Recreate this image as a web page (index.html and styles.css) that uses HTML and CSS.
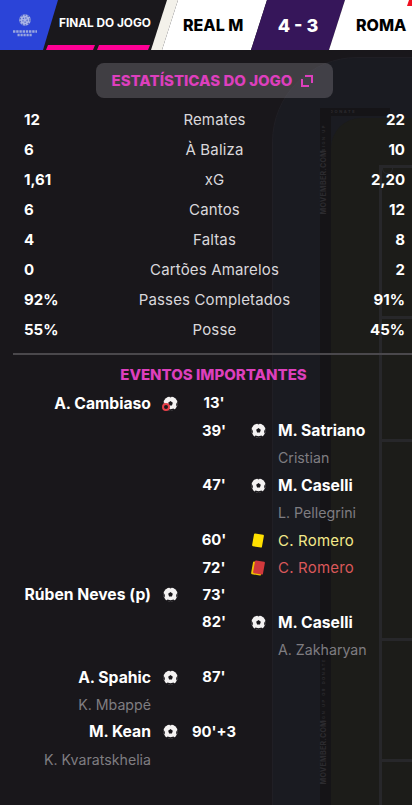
FILE: index.html
```html
<!DOCTYPE html>
<html lang="en">
<head>
    <meta charset="UTF-8">
    <meta name="viewport" content="width=device-width, initial-scale=1.0">
    <title>Final do Jogo</title>
    <link rel="stylesheet" href="styles.css">
</head>
<body>
    <div class="backdrop">
        <div class="backdrop-stand"></div>
        <div class="ad-band"><span class="ad-small">DONATE</span></div>
        <div class="ad-strip"></div>
        <span class="ad-small ad-vert ad-sign-top">SIGN UP</span>
        <span class="ad-text ad-text-top">MOVEMBER.COM</span>
        <span class="ad-small ad-vert ad-sign-bottom">SIGN UP OR DONATE</span>
        <span class="ad-text ad-text-bottom">MOVEMBER.COM</span>
        <div class="pitch">
            <div class="pitch-side"></div>
            <div class="pitch-line line-a"><span class="pitch-arc"></span></div>
            <div class="pitch-line line-b"></div>
            <div class="pitch-line line-c"></div>
            <div class="pitch-line line-d"></div>
            <div class="pitch-line line-e"></div>
        </div>
    </div>

    <div class="header">
        <div class="comp-logo">
            <svg width="24" height="23" viewBox="0 0 24 23">
                <circle cx="12" cy="6" r="5.8" fill="#a9b4e6"/>
                <circle cx="12" cy="6" r="5" fill="none" stroke="#4f64c8" stroke-width="1.4" stroke-dasharray="1.6 1.6"/>
                <circle cx="12" cy="6" r="2.2" fill="none" stroke="#4f64c8" stroke-width="1.2" stroke-dasharray="1.2 1.2"/>
                <path d="M0 17.5h24" stroke="#9aa6df" stroke-width="2.6" stroke-dasharray="2.4 .8"/>
                <path d="M4.5 21h15" stroke="#9aa6df" stroke-width="2.6" stroke-dasharray="2.2 .8"/>
            </svg>
        </div>
        <div class="stage">
            <span class="stage-name">FINAL DO JOGO</span>
            <div class="stage-bars">
                <span class="stage-bar"></span>
                <span class="stage-bar"></span>
            </div>
        </div>
        <div class="team-edge"></div>
        <div class="team team-home">REAL M</div>
        <div class="score">4 - 3</div>
        <div class="team team-away">ROMA<span class="team-flash"></span></div>
    </div>

    <div class="title-row">
        <div class="stats-title">
            <span>ESTATÍSTICAS DO JOGO</span>
            <svg width="14" height="14" viewBox="0 0 14 14" fill="none" stroke="#dd3fbd" stroke-width="2">
                <path d="M5 2h7v7"/>
                <path d="M2 5v7h7"/>
            </svg>
        </div>
    </div>

    <div class="stats">
        <div class="stat-row"><span class="stat-val">12</span><span class="stat-label">Remates</span><span class="stat-val right">22</span></div>
        <div class="stat-row"><span class="stat-val">6</span><span class="stat-label">À Baliza</span><span class="stat-val right">10</span></div>
        <div class="stat-row"><span class="stat-val">1,61</span><span class="stat-label">xG</span><span class="stat-val right">2,20</span></div>
        <div class="stat-row"><span class="stat-val">6</span><span class="stat-label">Cantos</span><span class="stat-val right">12</span></div>
        <div class="stat-row"><span class="stat-val">4</span><span class="stat-label">Faltas</span><span class="stat-val right">8</span></div>
        <div class="stat-row"><span class="stat-val">0</span><span class="stat-label">Cartões Amarelos</span><span class="stat-val right">2</span></div>
        <div class="stat-row"><span class="stat-val">92%</span><span class="stat-label">Passes Completados</span><span class="stat-val right">91%</span></div>
        <div class="stat-row"><span class="stat-val">55%</span><span class="stat-label">Posse</span><span class="stat-val right">45%</span></div>
    </div>

    <div class="divider"></div>

    <div class="events-title">EVENTOS IMPORTANTES</div>

    <div class="events">
        <div class="event"><span class="name-left">A. Cambiaso</span><span class="icon"><svg class="ball"><use href="#ball"/></svg><span class="own-goal"></span></span><span class="minute">13'</span></div>
        <div class="event"><span class="minute">39'</span><span class="icon"><svg class="ball"><use href="#ball"/></svg></span><span class="name-right">M. Satriano</span></div>
        <div class="event"><span class="assist-right">Cristian</span></div>
        <div class="event"><span class="minute">47'</span><span class="icon"><svg class="ball"><use href="#ball"/></svg></span><span class="name-right">M. Caselli</span></div>
        <div class="event"><span class="assist-right">L. Pellegrini</span></div>
        <div class="event"><span class="minute">60'</span><span class="icon"><span class="card card-yellow"></span></span><span class="name-right booked">C. Romero</span></div>
        <div class="event"><span class="minute">72'</span><span class="icon"><span class="card card-second"></span><span class="card card-red"></span></span><span class="name-right sent-off">C. Romero</span></div>
        <div class="event"><span class="name-left">Rúben Neves (p)</span><span class="icon"><svg class="ball"><use href="#ball"/></svg></span><span class="minute">73'</span></div>
        <div class="event"><span class="minute">82'</span><span class="icon"><svg class="ball"><use href="#ball"/></svg></span><span class="name-right">M. Caselli</span></div>
        <div class="event"><span class="assist-right">A. Zakharyan</span></div>
        <div class="event"><span class="name-left">A. Spahic</span><span class="icon"><svg class="ball"><use href="#ball"/></svg></span><span class="minute">87'</span></div>
        <div class="event"><span class="assist-left">K. Mbappé</span></div>
        <div class="event"><span class="name-left">M. Kean</span><span class="icon"><svg class="ball"><use href="#ball"/></svg></span><span class="minute">90'+3</span></div>
        <div class="event"><span class="assist-left">K. Kvaratskhelia</span></div>
    </div>

    <svg class="defs" width="0" height="0">
        <symbol id="ball" viewBox="0 0 16 16">
            <circle cx="8" cy="8" r="7.6" fill="#f4f2f2"/>
            <path d="M8 5.4l2.5 1.8-1 2.9H6.5l-1-2.9z" fill="#1a181c"/>
            <path d="M6 .4L8 1.6 10 .4 8 0zM.4 5.5l1.6 3-.3 3L.2 9zM15.6 5.5l-1.6 3 .3 3L15.8 9zM4.6 13.2l3.4 1 3.4-1 .6 1.6-4 1.2-4-1.2z" fill="#1a181c"/>
        </symbol>
    </svg>
</body>
</html>
```

FILE: styles.css
```css
html, body {
    margin: 0;
    padding: 0;
}
body {
    position: relative;
    width: 412px;
    height: 805px;
    overflow: hidden;
    background-color: #1a181c;
    color: #f4f3f5;
    font-family: Inter, 'Noto Sans', sans-serif;
    font-size: 14px;
}

/* faint stadium picture behind everything */
.backdrop {
    position: absolute;
    top: 50px;
    left: 0;
    right: 0;
    bottom: 0;
    overflow: hidden;
    background: #19171b;
}
.backdrop-stand {
    position: absolute;
    left: 272px;
    top: 7px;
    width: 300px;
    height: 900px;
    box-sizing: border-box;
    border: 1px solid #201f25;
    border-radius: 85px 0 0 0;
    background: #1a1b21;
}
.ad-band {
    position: absolute;
    left: 320px;
    top: 58px;
    right: 22px;
    height: 8px;
    background: #151417;
}
.ad-strip {
    position: absolute;
    left: 320px;
    top: 58px;
    bottom: 0;
    width: 11px;
    background: #151417;
}
.ad-small {
    display: block;
    margin-left: 10px;
    font-size: 4px;
    font-weight: 700;
    letter-spacing: 1.6px;
    line-height: 8px;
    color: #2b2a2e;
    white-space: nowrap;
}
.ad-vert {
    position: absolute;
    left: 320px;
    width: 8px;
    margin-left: 0;
    line-height: 8px;
    writing-mode: vertical-rl;
    transform: rotate(180deg);
}
.ad-sign-top { top: 74px; }
.ad-sign-bottom { top: 608px; }
.ad-text {
    position: absolute;
    left: 320px;
    width: 8px;
    writing-mode: vertical-rl;
    transform: rotate(180deg);
    font-size: 7px;
    font-weight: 800;
    letter-spacing: 0.3px;
    color: #2c2b2f;
    line-height: 8px;
    white-space: nowrap;
}
.ad-text-top { top: 100px; }
.ad-text-bottom { top: 670px; }
.pitch {
    position: absolute;
    left: 331px;
    top: 68px;
    right: -40px;
    bottom: -20px;
    background: #1c1c19;
    border-radius: 30px 0 0 0;
}
.pitch-side {
    position: absolute;
    left: 48px;
    top: 47px;
    bottom: 0;
    width: 3px;
    background: #27272a;
}
.pitch-line {
    position: absolute;
    left: 48px;
    right: 0;
    height: 3px;
    background: #27272a;
}
.line-a { top: 47px; }
.line-b { top: 198px; }
.line-c { top: 321px; }
.line-d { top: 520px; }
.line-e { top: 641px; }
.pitch-arc {
    position: absolute;
    left: 3px;
    top: 3px;
    width: 9px;
    height: 5px;
    border: 1px solid #27272a;
    border-top: 0;
    border-radius: 0 0 9px 9px;
}

/* match header */
.header {
    position: relative;
    display: flex;
    height: 50px;
    background: #1a181c;
}
.comp-logo {
    display: flex;
    align-items: center;
    justify-content: center;
    width: 58px;
    padding-right: 9px;
    padding-top: 1px;
    box-sizing: border-box;
    background: #2b44d8;
    clip-path: polygon(0 0, 100% 0, 43px 100%, 0 100%);
}
.stage {
    position: relative;
    width: 109px;
    flex: none;
}
.stage-name {
    display: block;
    margin: 16px 0 0 1px;
    font-size: 11.8px;
    font-weight: 700;
    line-height: 14px;
    white-space: nowrap;
    color: #fff;
}
.stage-bars {
    position: absolute;
    left: -12px;
    bottom: 0;
    display: flex;
    gap: 2px;
}
.stage-bar {
    width: 49px;
    height: 5px;
    background: #ff0095;
    clip-path: polygon(2px 0, 100% 0, calc(100% - 2px) 100%, 0 100%);
}
.stage-bar + .stage-bar {
    width: 53px;
}
.team-edge {
    flex: none;
    width: 27px;
    margin-left: -16px;
    background: #f3f1ea;
    clip-path: polygon(16px 0, 100% 0, 11px 100%, 0 100%);
}
.team {
    display: flex;
    align-items: center;
    background: #fff;
    color: #000;
    font-size: 16px;
    font-weight: 800;
}
.team-home {
    flex: none;
    width: 105px;
    margin-left: -16px;
    padding-left: 21px;
    box-sizing: border-box;
    clip-path: polygon(16px 0, 100% 0, 89px 100%, 0 100%);
}
.score {
    flex: none;
    display: flex;
    align-items: center;
    justify-content: center;
    width: 94px;
    margin-left: -16px;
    background: #36165a;
    color: #fff;
    font-size: 18px;
    font-weight: 800;
    clip-path: polygon(16px 0, 100% 0, 78px 100%, 0 100%);
}
.team-away {
    position: relative;
    flex: 1;
    margin-left: -16px;
    padding-left: 27px;
    clip-path: polygon(16px 0, 100% 0, 100% 100%, 0 100%);
}
.team-flash {
    position: absolute;
    top: 0;
    right: 0;
    width: 5px;
    height: 6px;
    background: #f01020;
    clip-path: polygon(2px 0, 100% 0, 100% 100%, 0 100%);
}

.title-row {
    position: relative;
    display: flex;
    justify-content: flex-start;
    padding: 13px 0 0 96px;
}
.stats-title {
    display: flex;
    align-items: center;
    justify-content: center;
    gap: 8px;
    width: 237px;
    height: 35px;
    padding-right: 3px;
    box-sizing: border-box;
    border-radius: 8px;
    background: rgba(120, 116, 124, 0.42);
    color: #dd3fbd;
    font-size: 15px;
    font-weight: 800;
}

.stats {
    position: relative;
    padding: 6px 7px 0 24px;
}
.stat-row {
    display: grid;
    grid-template-columns: 70px 1fr 70px;
    align-items: center;
    height: 30px;
}
.stat-val {
    font-size: 15px;
    font-weight: 700;
    color: #fff;
}
.stat-val.right {
    text-align: right;
}
.stat-label {
    text-align: center;
    color: #d9d7db;
    font-size: 15px;
    letter-spacing: 0.15px;
}

.divider {
    position: relative;
    height: 2px;
    margin: 9px 0 0 13px;
    background: #4a484c;
}
.events-title {
    position: relative;
    margin-top: 11px;
    padding-left: 15px;
    text-align: center;
    color: #dd3fbd;
    font-size: 15px;
    font-weight: 800;
    line-height: 18px;
}

.events {
    position: relative;
    margin-top: 5.5px;
}
.event {
    display: grid;
    grid-template-columns: 151px 39px 48px 40px 1fr;
    align-items: center;
    height: 27.4px;
    font-size: 14.2px;
}
.name-left, .assist-left {
    grid-column: 1;
    text-align: right;
    white-space: nowrap;
}
.name-left, .name-right {
    font-size: 15.7px;
    font-weight: 700;
    color: #fff;
}
.name-right, .assist-right {
    grid-column: 5;
    white-space: nowrap;
}
.assist-left, .assist-right {
    color: #7f7d81;
}
.icon {
    position: relative;
    display: flex;
    align-items: center;
    justify-content: center;
    height: 16px;
}
.minute {
    grid-column: 3;
    text-align: center;
    font-size: 14.8px;
    font-weight: 700;
    color: #fff;
    white-space: nowrap;
}
.minute + .icon {
    grid-column: 4;
}
.name-left + .icon {
    grid-column: 2;
}
.ball {
    width: 15px;
    height: 15px;
}
.own-goal {
    position: absolute;
    left: 11px;
    top: 8px;
    width: 4px;
    height: 4px;
    border: 2px solid #e8404a;
    border-radius: 50%;
    background: #1a181c;
}
.card {
    display: block;
    width: 10px;
    height: 13px;
    border-radius: 1px;
    transform: rotate(10deg);
}
.card-yellow {
    background: #ffe000;
}
.card-second {
    position: absolute;
    left: 14px;
    top: 2px;
    background: #f2c200;
}
.card-red {
    position: relative;
    left: 1px;
    background: #d2393c;
}
.name-right.booked {
    color: #f3e98a;
    font-size: 15px;
    font-weight: 400;
    letter-spacing: 0.2px;
}
.name-right.sent-off {
    color: #d9585a;
    font-size: 15px;
    font-weight: 400;
    letter-spacing: 0.2px;
}
.defs {
    position: absolute;
}
```
